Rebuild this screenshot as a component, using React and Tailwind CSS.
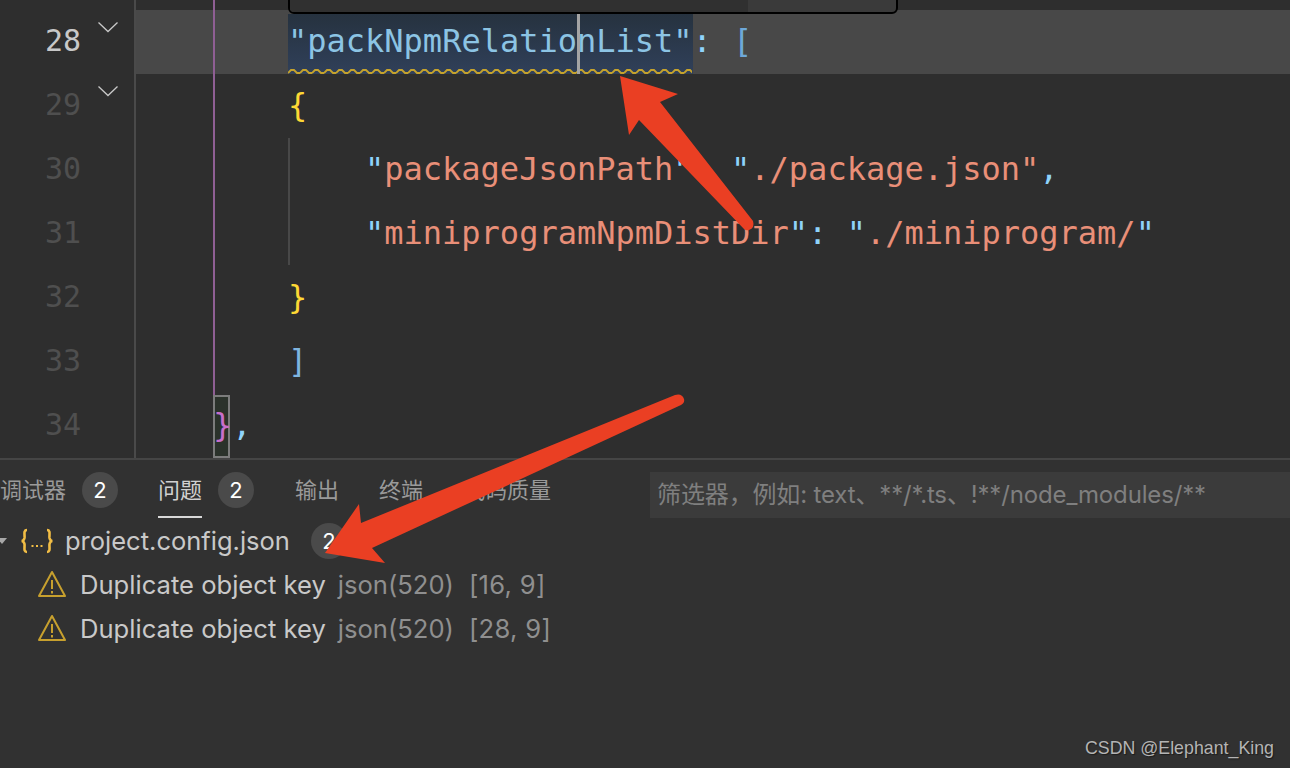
import React from 'react'

const mono = { fontFamily: '"DejaVu Sans Mono", monospace' }

function Chevron() {
  return (
    <svg width="22" height="12" viewBox="0 0 22 12" fill="none" stroke="#c8c8c8" strokeWidth="1.3">
      <path d="M1.5 1.5 L11 10.5 L20.5 1.5" />
    </svg>
  )
}

function WarningIcon() {
  return (
    <svg width="30" height="28" viewBox="0 0 30 28" fill="none" className="mb-[3px] shrink-0">
      <path d="M15 2 L28 26 L2 26 Z" stroke="#c7a02e" strokeWidth="2" strokeLinejoin="round" />
      <path d="M15 10 V19" stroke="#c7a02e" strokeWidth="2" />
      <path d="M15 21 V23.5" stroke="#c7a02e" strokeWidth="2" />
    </svg>
  )
}

function JsonIcon() {
  return (
    <svg width="34" height="26" viewBox="0 0 34 26" fill="none" stroke="#f1bd45" strokeWidth="2.6" className="shrink-0">
      <path d="M7 2 C3 2 5 7 4.5 10 C4 12 3 13 1.5 13 C3 13 4 14 4.5 16 C5 19 3 24 7 24" />
      <path d="M27 2 C31 2 29 7 29.5 10 C30 12 31 13 32.5 13 C31 13 30 14 29.5 16 C29 19 31 24 27 24" />
      <path d="M11.5 18 H13.5 M16 18 H18 M20.5 18 H22.5" strokeWidth="2" />
    </svg>
  )
}

function Badge({ n }) {
  return (
    <span className="flex h-9 w-9 shrink-0 items-center justify-center rounded-full bg-[#4a4a4a] text-[22px] text-white">
      {n}
    </span>
  )
}

function CodeLine({ indent, children }) {
  return (
    <div
      className="flex h-16 items-center whitespace-pre pb-[3px] text-[32px]"
      style={{ ...mono, paddingLeft: indent }}
    >
      {children}
    </div>
  )
}

function ProblemRow({ col, row }) {
  return (
    <div className="flex h-11 items-center pl-[37px]">
      <WarningIcon />
      <span className="ml-[13px] text-[25.6px] text-[#c9c9c9]">Duplicate object key</span>
      <span className="ml-3 text-[25.6px] text-[#8f8f8f]">json(520)</span>
      <span className="ml-[15px] text-[25.6px] tracking-[0.3px] text-[#8f8f8f]">[{col}, {row}]</span>
    </div>
  )
}

export default function App() {
  const lineNumbers = [28, 29, 30, 31, 32, 33, 34]

  return (
    <div
      className="relative flex h-[768px] w-[1290px] flex-col overflow-hidden bg-[#313131]"
      style={{ fontFamily: 'Inter, "Noto Sans CJK SC", sans-serif' }}
    >
      {/* EDITOR */}
      <div className="relative flex h-[460px] shrink-0 border-b-2 border-[#454545] bg-[#2e2e2e]">
        <div className="w-[136px] shrink-0 border-r-2 border-[#4a4a4a] pt-[10px]" style={mono}>
          {lineNumbers.map((n) => (
            <div key={n} className="relative flex h-16 items-center pb-[3px] pl-[45px]">
              <span className={`text-[30px] ${n === 28 ? 'text-[#c8c8c8]' : 'text-[#4f4f4f]'}`}>{n}</span>
              {n < 30 && (
                <span className="absolute left-[97px] top-[11px]">
                  <Chevron />
                </span>
              )}
            </div>
          ))}
        </div>

        <div className="relative flex-1 pt-[10px]">
          {/* active line */}
          <div
            className="flex h-16 items-end whitespace-pre bg-[#484848] pl-[152px] text-[32px]"
            style={mono}
          >
            <span className="relative flex h-[60px] items-center bg-gradient-to-b from-[#26323f] to-[#30405a] pb-[6px] text-[#8cc4e4]">
              "packNpmRelationList"
              <svg className="absolute bottom-0 left-0" width="404" height="5">
                <defs>
                  <pattern id="squiggle" width="12" height="5" patternUnits="userSpaceOnUse">
                    <path d="M0 4 L3 1 L6 1 L9 4 L12 4" fill="none" stroke="#c6a32c" strokeWidth="1.8" />
                  </pattern>
                </defs>
                <rect width="404" height="5" fill="url(#squiggle)" />
              </svg>
              <span className="absolute bottom-0 left-[289px] top-0 w-[3px] bg-[#a4a4a4]" />
            </span>
            <span className="flex h-16 items-center pb-[3px]">
              <span className="text-[#8fd3fb]">: </span>
              <span className="ml-[2px] text-[#6ea8d8]">[</span>
            </span>
          </div>

          {/* indent guides + bracket match */}
          <div className="absolute left-[77px] top-0 h-[395px] w-[2px] bg-[#8f5f94]" />
          <div className="absolute left-[77px] top-[395px] h-[63px] w-[17px] border-2 border-[#7c7c7c] bg-[#2b322b]" />
          <div className="absolute left-[152px] top-[138px] h-[127px] w-[2px] bg-[#484848]" />

          <CodeLine indent={152}>
            <span className="text-[#fdd835]">{'{'}</span>
          </CodeLine>
          <CodeLine indent={229}>
            <span className="text-[#8fd3fb]">"</span>
            <span className="text-[#e98f78]">packageJsonPath</span>
            <span className="text-[#8fd3fb]">": "</span>
            <span className="text-[#e98f78]">./package.json"</span>
            <span className="text-[#8fd3fb]">,</span>
          </CodeLine>
          <CodeLine indent={229}>
            <span className="text-[#8fd3fb]">"</span>
            <span className="text-[#e98f78]">miniprogramNpmDistDir</span>
            <span className="text-[#8fd3fb]">": "</span>
            <span className="text-[#e98f78]">./miniprogram/</span>
            <span className="text-[#8fd3fb]">"</span>
          </CodeLine>
          <CodeLine indent={152}>
            <span className="text-[#fdd835]">{'}'}</span>
          </CodeLine>
          <CodeLine indent={152}>
            <span className="text-[#7fb5e0]">]</span>
          </CodeLine>
          <CodeLine indent={77}>
            <span className="relative text-[#c86fcb]">{'}'}</span>
            <span className="text-[#8fd3fb]">,</span>
          </CodeLine>

          {/* hover widget, cut off by the top of the shot */}
          <div className="absolute -top-[40px] left-[152px] flex h-[54px] w-[610px] overflow-hidden rounded-md border-2 border-black bg-[#3a3a3a]">
            <div className="w-[458px] bg-[#303030]" />
          </div>
        </div>
      </div>

      {/* PANEL */}
      <div className="flex flex-1 flex-col">
        <div className="flex h-[59px] shrink-0 items-center pt-px text-[22px] text-[#9a9a9a]">
          <span>调试器</span>
          <span className="ml-4"><Badge n={2} /></span>
          <span className="relative ml-10 text-[#d0d0d0]">
            问题
            <span className="absolute -bottom-[11px] left-0 h-[2px] w-full bg-[#d8d8d8]" />
          </span>
          <span className="ml-4"><Badge n={2} /></span>
          <span className="ml-[41px]">输出</span>
          <span className="ml-10">终端</span>
          <span className="ml-10">代码质量</span>
          <div className="ml-[99px] mt-[10px] flex h-[46px] flex-1 items-center whitespace-pre bg-[#3b3b3b] pl-[7px] text-[24px] tracking-[-0.15px] text-[#7f7f7f]">
            筛选器，例如: text、**/*.ts、!**/node_modules/**
          </div>
        </div>

        <div className="flex h-11 items-center pl-5">
          <span className="absolute left-[-3px] h-0 w-0 border-x-[5px] border-t-[6px] border-x-transparent border-t-[#a8a8a8]" />
          <JsonIcon />
          <span className="ml-[11px] text-[25.5px] text-[#c9c9c9]">project.config.json</span>
          <span className="ml-[21px]"><Badge n={2} /></span>
        </div>
        <ProblemRow col={16} row={9} />
        <ProblemRow col={28} row={9} />

        <div
          className="mt-auto flex justify-end pb-[9px] pr-4 text-[17.8px] leading-[22px] text-[#b4b4b4]"
          style={{ fontFamily: '"Liberation Sans", sans-serif', textShadow: '1px 1px 1px #1c1c1c' }}
        >
          CSDN @Elephant_King
        </div>
      </div>

      {/* red annotation arrows */}
      <svg className="pointer-events-none absolute left-0 top-0" width="1290" height="768" fill="#ea3f23">
        <path d="M620 76 L678 94 L660 102 L753 221 Q755 228 749 230 Q746 231 744 229 L639 120 L629 135 Z" />
        <path d="M325 553 L359 504 L361 523 L675 395 Q682 393 684 399 Q685 403 681 405 L372 548 L385 563 Z" />
      </svg>
    </div>
  )
}
